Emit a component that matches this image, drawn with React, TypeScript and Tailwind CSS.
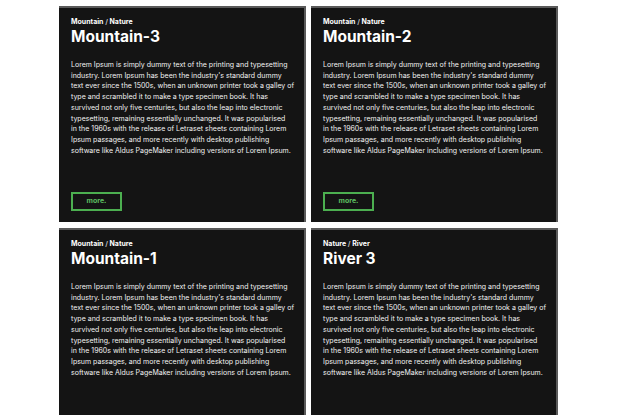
import React from 'react';

type Post = {
  tags: [string, string];
  title: string;
  more: boolean;
};

const posts: Post[] = [
  { tags: ['Mountain', 'Nature'], title: 'Mountain-3', more: true },
  { tags: ['Mountain', 'Nature'], title: 'Mountain-2', more: true },
  { tags: ['Mountain', 'Nature'], title: 'Mountain-1', more: false },
  { tags: ['Nature', 'River'], title: 'River 3', more: false },
];

const lines = [
  'Lorem Ipsum is simply dummy text of the printing and typesetting',
  "industry. Lorem Ipsum has been the industry's standard dummy",
  'text ever since the 1500s, when an unknown printer took a galley of',
  'type and scrambled it to make a type specimen book. It has',
  'survived not only five centuries, but also the leap into electronic',
  'typesetting, remaining essentially unchanged. It was popularised',
  'in the 1960s with the release of Letraset sheets containing Lorem',
  'Ipsum passages, and more recently with desktop publishing',
  'software like Aldus PageMaker including versions of Lorem Ipsum.',
];

const Card: React.FC<{ post: Post }> = ({ post }) => (
  <article className="flex h-[216px] flex-col border-t-2 border-r-2 border-[#5a5a5a] bg-[#141414] px-3 pt-[8px] pb-[11px] text-white">
    <div className="text-[7px] font-bold leading-[12px]">
      {post.tags[0]} <span className="text-[#bbb]">/</span> {post.tags[1]}
    </div>
    <h2 className="text-[15.5px] font-bold leading-[18px]">{post.title}</h2>
    <p className="mt-[14px] text-[7px] leading-[10.7px] text-[#f2f2f2]">
      {lines.map((l) => (
        <span key={l} className="block whitespace-nowrap">
          {l}
        </span>
      ))}
    </p>
    {post.more && (
      <button className="mt-auto h-[19px] w-[51px] border-2 border-[#4caf50] text-[7px] font-bold text-[#5cbf60]">
        more.
      </button>
    )}
  </article>
);

const App: React.FC = () => {
  return (
    <div className="min-h-screen bg-white pt-[6px] font-['Inter',sans-serif]">
      <div className="ml-[59px] grid w-[499px] grid-cols-2 gap-x-[5px] gap-y-[6px]">
        {posts.map((p) => (
          <Card key={p.title} post={p} />
        ))}
      </div>
    </div>
  );
};

export default App;
